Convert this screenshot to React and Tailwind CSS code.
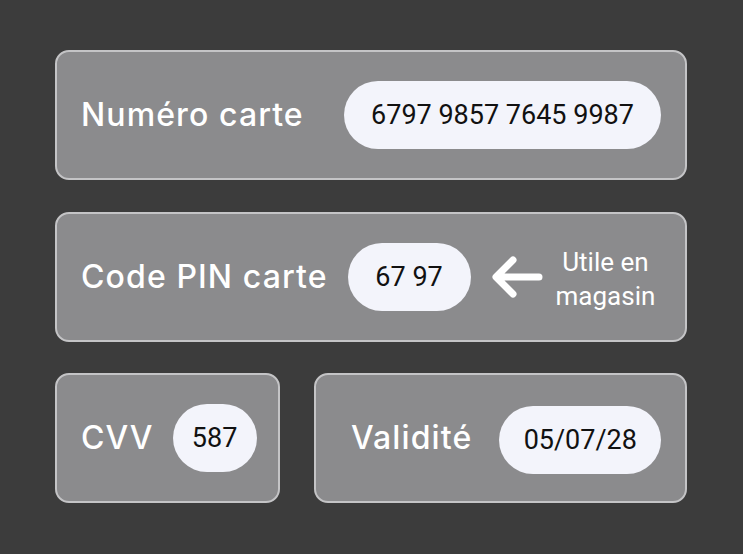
import React from 'react';

const labelFont = { fontFamily: 'Inter, "Open Sans", sans-serif' };

function Pill({ children, className }) {
  return (
    <div
      className={`h-[68px] rounded-full bg-[#f3f4fb] flex items-center justify-center text-[27px] text-[#111] shrink-0 ${className}`}
      style={{ fontFamily: 'Roboto, "Liberation Sans", sans-serif' }}
    >
      {children}
    </div>
  );
}

function Label({ children }) {
  return (
    <span className="text-white text-[32px] font-medium tracking-[1.1px] whitespace-nowrap" style={labelFont}>
      {children}
    </span>
  );
}

function Card({ children, className }) {
  return (
    <div className={`h-[130px] rounded-[14px] border-2 border-[#c4c4c6] bg-[#8b8b8d] flex items-center ${className}`}>
      {children}
    </div>
  );
}

export default function App() {
  return (
    <div className="w-[743px] h-[554px] bg-[#3c3c3c] pt-[50px] pl-[55px]">
      <div className="w-[632px] flex flex-col gap-[32px]">
        <Card className="pl-[24px] pr-[24px] justify-between">
          <Label>Numéro carte</Label>
          <Pill className="w-[317px]">6797 9857 7645 9987</Pill>
        </Card>

        <Card className="pl-[24px]">
          <Label>Code PIN carte</Label>
          <Pill className="w-[123px] ml-[20px]">67 97</Pill>
          <svg className="ml-[20px] shrink-0" width="52" height="44" viewBox="0 0 52 44" fill="none">
            <path d="M48 22H6M22 5L5 22l17 17" stroke="white" strokeWidth="7" strokeLinecap="round" strokeLinejoin="round" />
          </svg>
          <div
            className="ml-[13px] mt-[3px] text-white text-[26px] leading-[34px] text-center whitespace-nowrap"
            style={{ fontFamily: 'Roboto, "Liberation Sans", sans-serif' }}
          >
            Utile en<br />magasin
          </div>
        </Card>

        <div className="flex gap-[34px] -mt-[1px]">
          <Card className="w-[225px] pl-[24px]">
            <Label>CVV</Label>
            <Pill className="w-[84px] ml-[19px]">587</Pill>
          </Card>
          <Card className="w-[373px] pl-[35px]">
            <Label>Validité</Label>
            <Pill className="w-[162px] ml-[27px] mt-[4px]">05/07/28</Pill>
          </Card>
        </div>
      </div>
    </div>
  );
}
